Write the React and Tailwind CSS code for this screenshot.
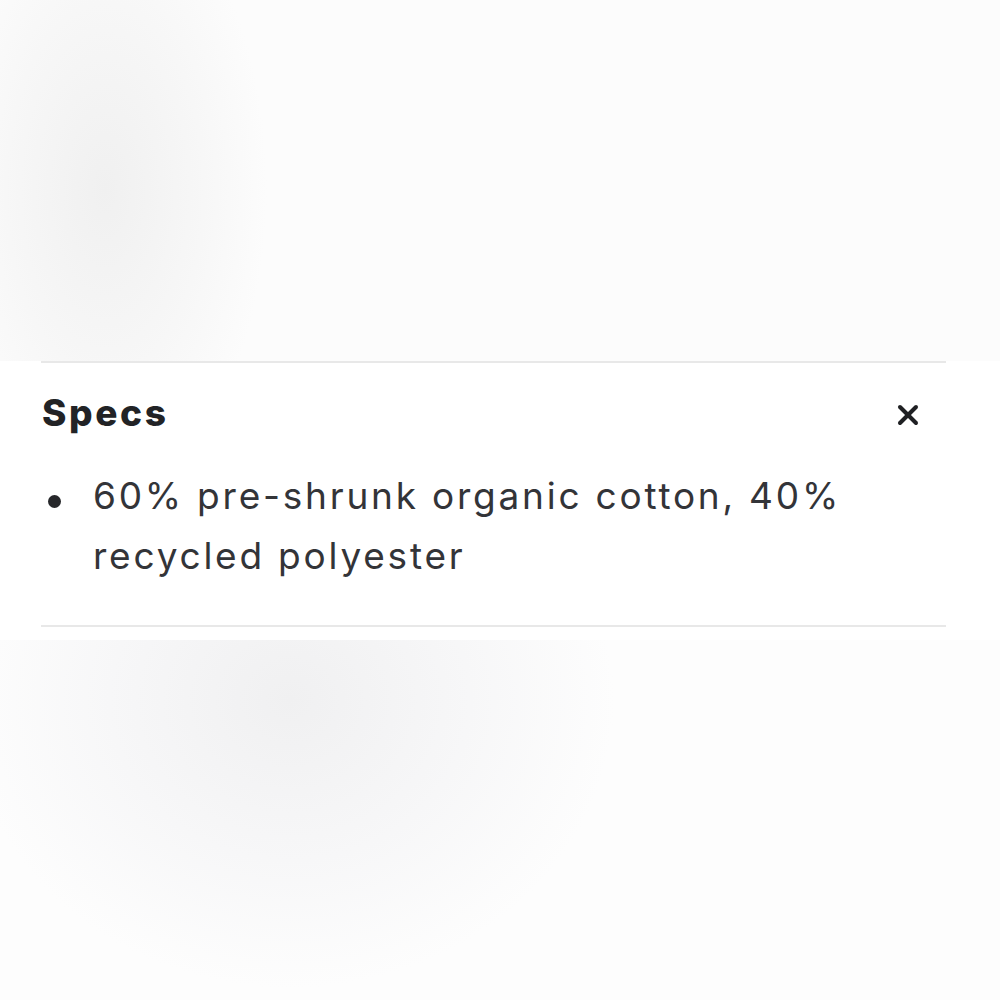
import { X } from "lucide-react";

const specs = ["60% pre-shrunk organic cotton, 40% recycled polyester"];

const App = () => {
  return (
    <div className="w-[1000px] h-[1000px] flex flex-col font-['Inter','Liberation_Sans',sans-serif]">
      {/* blurred backdrop above the panel */}
      <div className="h-[361px] bg-[radial-gradient(ellipse_180px_340px_at_105px_190px,#f0f0f0,#f7f7f7_55%,#fcfcfc_90%)]" />

      <div className="h-[279px] bg-white pl-[41px] pr-[54px]">
        <div className="border-t-2 border-b-2 border-[#e8e8e8] h-[266px]">
          <div className="flex items-start justify-between pt-[30px] pl-[1px] pr-[22px]">
            <h2 className="text-[37px] leading-[40px] font-extrabold text-[#222326] tracking-[0.07em]">
              Specs
            </h2>
            <button className="mt-[6px] text-[#1f2023]">
              <X size={32} strokeWidth={3} />
            </button>
          </div>
          <ul className="mt-[33px] pr-[30px] text-[37px] leading-[60px] text-[#333438] tracking-[0.075em]">
            {specs.map((s) => (
              <li key={s} className="flex">
                <span className="w-[52px] shrink-0 flex pt-[29px] pl-[7px]">
                  <span className="block min-w-[13px] w-[13px] h-[13px] shrink-0 rounded-full bg-[#26272a]" />
                </span>
                <span>{s}</span>
              </li>
            ))}
          </ul>
        </div>
      </div>

      {/* blurred backdrop below the panel */}
      <div className="flex-1 bg-[radial-gradient(ellipse_360px_320px_at_290px_60px,#f0f0f1,#f7f7f8_50%,#fdfdfd_90%)]" />
    </div>
  );
};

export default App;
